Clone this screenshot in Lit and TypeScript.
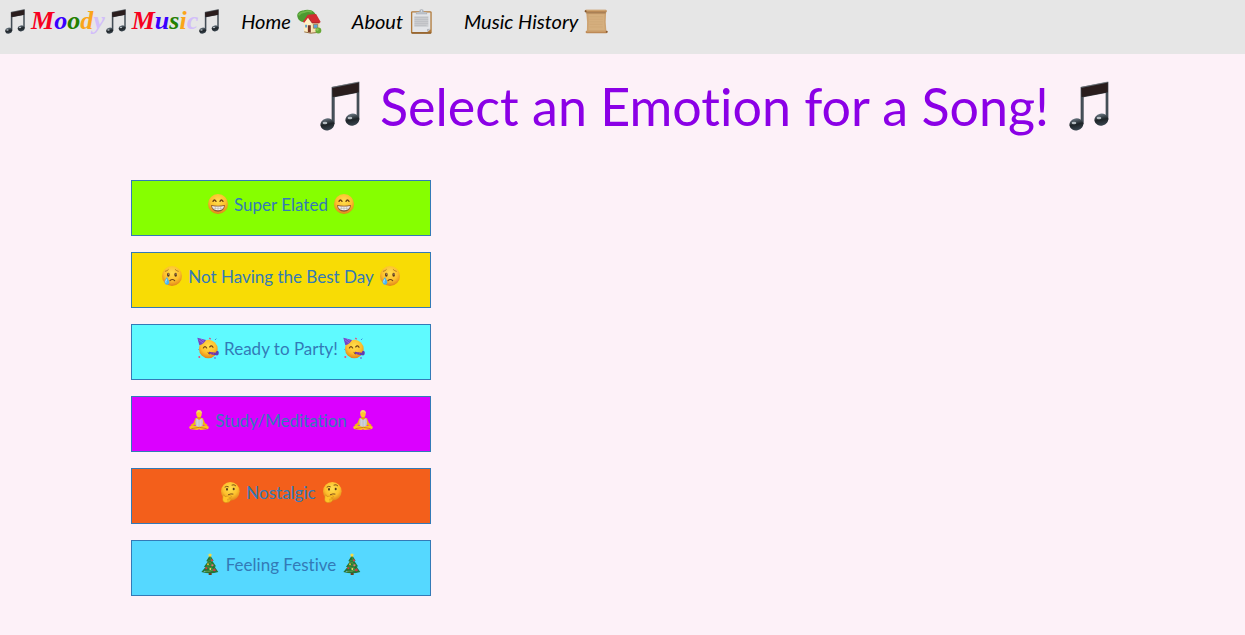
import { LitElement, html, svg, css, type SVGTemplateResult } from "lit";
import { customElement } from "lit/decorators.js";

interface Art {
  box: string;
  body: SVGTemplateResult;
}

const note: Art = {
  box: "48 32 120 150",
  body: svg`
    <path d="M83 50 166 34V148H158V68L92 81V162H83Z" fill="#3b434a"/>
    <path d="M85 53 164 37V66L86 80Z" fill="#2a1d1d"/>
    <path d="M85 51 164 35" stroke="#777b80" stroke-width="2"/>
    <path d="M87.500 80V158M162 67V142" stroke="#596773" stroke-width="2"/>
    <ellipse cx="70" cy="162" rx="21" ry="18" transform="rotate(-12 70 162)" fill="url(#noteHead)"/>
    <ellipse cx="145" cy="148" rx="21" ry="18" transform="rotate(-12 145 148)" fill="url(#noteHead)"/>
    <ellipse cx="63" cy="158" rx="7" ry="4" fill="#d5dce1" opacity=".8"/>
    <ellipse cx="138" cy="143" rx="7" ry="4" fill="#d5dce1" opacity=".8"/>`,
};

const house: Art = {
  box: "202 26 76 73",
  body: svg`
    <path d="M226 58h7v34h-7z" fill="#75512d"/>
    <path d="M204 50C199 39 210 29 221 29C232 24 251 27 256 37C264 48 253 62 240 62C230 68 208 65 204 50Z" fill="#4c9a31"/>
    <path d="M207 44q6-11 18-10q10-6 22 0" fill="none" stroke="#71b94c" stroke-width="5"/>
    <path d="M224 62 237 48 257 46 271 64V95L244 98 224 94Z" fill="#f5e3b2"/>
    <path d="M224 64 235 49 246 65V98L224 94Z" fill="#fff0c4"/>
    <path d="M235 42 260 40 274 64 270 67H248L236 50 224 66 220 63Z" fill="#d22c31"/>
    <path d="M236 50 248 67H270" stroke="#8f2022" stroke-width="2" fill="none"/>
    <path d="M235 74h9v23l-9-2z" fill="#7a3524"/>
    <path d="M252 71h13v12h-13z" fill="#58a6da" stroke="#9a6735" stroke-width="2"/>
    <path d="M227 72h5v9h-5z" fill="#4d91cc"/>
    <path d="M224 94 244 98 271 95" stroke="#987245" stroke-width="3" fill="none"/>
    <circle cx="267" cy="90" r="9" fill="#67a936"/>
    <circle cx="264" cy="87" r="4" fill="#8ac653"/>`,
};

const clipboard: Art = {
  box: "544 24 68 76",
  body: svg`
    <rect x="546" y="31" width="63" height="68" rx="4" fill="#b17b3c"/>
    <path d="M548 97h59" stroke="#815425" stroke-width="3"/>
    <path d="M550 35h55v51l-9 8h-46z" fill="#e3e5e8"/>
    <path d="M605 84l-10 10v-9z" fill="#b3b7bd"/>
    <path d="M556 46h43v32h-43z" fill="#cbcdd0"/>
    <path d="M557 50h41M557 56h41M557 62h41M557 68h41M557 74h36" stroke="#b9bbbf" stroke-width="2"/>
    <path d="M561 40v-5l10-3q0-7 7-7t7 7l10 3v5z" fill="#a7adb6"/>
    <path d="M563 36h30" stroke="#e1e5eb" stroke-width="2"/>
    <circle cx="578" cy="30" r="2.500" fill="#edf0f4"/>`,
};

const scroll: Art = {
  box: "468 22 74 78",
  body: svg`
    <path d="M473 32H535Q532 60 536 93H475Q477 60 473 32Z" fill="#cda372"/>
    <path d="M480 38H530Q527 62 531 88H480Q482 62 480 38Z" fill="#d5af7e"/>
    <path d="M482 46h44M482 54h43M483 62h42M483 70h41M483 78h42" stroke="#cba370" stroke-width="1.500"/>
    <rect x="469" y="24" width="68" height="9" rx="4" fill="#ba8a57"/>
    <path d="M472 26h62" stroke="#e1bd8d" stroke-width="2"/>
    <path d="M472 34h62" stroke="#81572f" stroke-width="2"/>
    <rect x="471" y="90" width="68" height="8" rx="4" fill="#bd8955"/>
    <path d="M474 91h60" stroke="#e0b986" stroke-width="2"/>
    <circle cx="537" cy="93" r="3" fill="#8b5c32"/>
    <circle cx="471" cy="29" r="3" fill="#80542e"/>`,
};

const grin: Art = {
  box: "0 0 66 66",
  body: svg`
    <circle cx="33" cy="33" r="30" fill="url(#face)"/>
    <path d="M18 25q4-8 9 0M39 25q4-8 9 0" fill="none" stroke="#70420e" stroke-width="4" stroke-linecap="round"/>
    <path d="M12 36Q33 40 54 36Q52 56 33 56T12 36Z" fill="#8e5733"/>
    <path d="M15 39Q33 42 51 39Q49 52 33 52T15 39Z" fill="#f4f1ec"/>
    <path d="M17 46H49M25 41V50M33 41V52M41 41V50" stroke="#a9a49d" stroke-width="1.500"/>`,
};

const cry: Art = {
  box: "0 0 66 66",
  body: svg`
    <circle cx="33" cy="33" r="30" fill="url(#face)"/>
    <path d="M13 19q6-1 9-5M43 14q4 4 9 5" fill="none" stroke="#a9721f" stroke-width="2.500" stroke-linecap="round"/>
    <ellipse cx="22" cy="29" rx="4" ry="6" fill="#5b3818"/>
    <ellipse cx="44" cy="29" rx="4" ry="6" fill="#5b3818"/>
    <circle cx="23" cy="27" r="1.500" fill="#fff5d0"/>
    <circle cx="45" cy="27" r="1.500" fill="#fff5d0"/>
    <path d="M27 47q7-7 14 0" fill="none" stroke="#764414" stroke-width="3.500" stroke-linecap="round"/>
    <path d="M18 36C14 43 10 47 11 53Q13 61 20 59Q27 56 24 48Z" fill="#48b6f3"/>
    <path d="M17 43q-4 7-2 10" fill="none" stroke="#c3efff" stroke-width="3"/>`,
};

const party: Art = {
  box: "0 0 66 66",
  body: svg`
    <circle cx="34" cy="36" r="28" fill="url(#face)"/>
    <path d="M1 2 27 9Q21 21 7 25Z" fill="#7344c5"/>
    <path d="M5 8l13 10M10 5l11 8" stroke="#a27df0" stroke-width="2"/>
    <path d="M19 33q5-8 10 0M38 30q6-7 10 1" fill="none" stroke="#714313" stroke-width="3.500" stroke-linecap="round"/>
    <path d="M30 44q5 4 10 2l-3 7z" fill="#763b20"/>
    <path d="M36 44 56 47Q59 38 65 44Q67 57 58 55Q47 54 36 50Z" fill="#633caf"/>
    <path d="M43 46l-2 5M50 47l-2 6" stroke="#d6467e" stroke-width="2"/>
    <path d="M37 3l4 4" stroke="#e64e78" stroke-width="4"/>
    <path d="M54 9l4-4" stroke="#358edc" stroke-width="3"/>
    <path d="M4 37l3 3" stroke="#45a2e1" stroke-width="3"/>
    <circle cx="7" cy="60" r="3" fill="#ec487a"/>
    <circle cx="54" cy="63" r="2.500" fill="#6d40bd"/>`,
};

const lotus: Art = {
  box: "0 0 66 66",
  body: svg`
    <path d="M22 28q11-5 23 0l6 14 8 6-3 5-12-6-1 8H24l-1-8-12 6-4-5 9-6z" fill="#f3af16"/>
    <path d="M24 28q9 4 19 0l2 10-2 16H24l-2-16z" fill="#c4c7d1"/>
    <path d="M29 31v22M38 31v22" stroke="#d6d9e1" stroke-width="2"/>
    <path d="M29 21h9v9q-5 4-9 0z" fill="#e49a17"/>
    <ellipse cx="33" cy="15" rx="8" ry="10" fill="#ffc629"/>
    <path d="M25 15q-1-12 8-12t9 12q-3-6-9-6t-8 6z" fill="#f5d86c"/>
    <path d="M5 52Q15 47 33 54Q51 47 61 52Q65 58 57 61L38 63 33 61 28 63 9 61Q1 58 5 52Z" fill="#fbc022"/>
    <path d="M10 59 34 55 56 59" fill="none" stroke="#c67c11" stroke-width="2.500"/>`,
};

const think: Art = {
  box: "0 0 66 66",
  body: svg`
    <circle cx="34" cy="31" r="28" fill="url(#face)"/>
    <path d="M18 18q5-4 10-1M39 12q7-3 11 2" fill="none" stroke="#7f5015" stroke-width="3" stroke-linecap="round"/>
    <ellipse cx="24" cy="25" rx="3" ry="4" fill="#5b3b16"/>
    <ellipse cx="44" cy="24" rx="3" ry="4" fill="#5b3b16"/>
    <path d="M28 41q8-4 14-2" fill="none" stroke="#81501a" stroke-width="3" stroke-linecap="round"/>
    <path d="M12 43Q16 39 18 47L32 44Q39 43 37 48L29 51Q37 51 35 56Q34 65 20 65Q11 65 11 55Z" fill="#ffc527" stroke="#cf8518" stroke-width="1.500"/>
    <path d="M24 55h9M24 60h8" stroke="#cc821a" stroke-width="1.500"/>`,
};

const tree: Art = {
  box: "0 0 66 66",
  body: svg`
    <path d="M29 56h9v10h-9z" fill="#713c1c"/>
    <path d="M33 6 44 23 40 24 51 40 47 41 58 57Q33 65 7 57L19 43 15 41 26 26 22 24Z" fill="#247334"/>
    <path d="M33 12 37 21 27 24M31 29 42 35 22 40M35 44 47 52 18 55" fill="none" stroke="#3c8d3e" stroke-width="4"/>
    <path d="M25 27q8 5 16-5M19 43q16 5 26-8M14 56q22 2 35-11" fill="none" stroke="#dec766" stroke-width="1.500" stroke-dasharray="2 2"/>
    <circle cx="39" cy="22" r="3" fill="#df3c4c"/>
    <circle cx="27" cy="34" r="3" fill="#e5b930"/>
    <circle cx="40" cy="37" r="3" fill="#ef6577"/>
    <circle cx="22" cy="46" r="3" fill="#d93443"/>
    <circle cx="34" cy="48" r="3" fill="#f7da66"/>
    <circle cx="46" cy="51" r="4" fill="#cf354b"/>
    <circle cx="17" cy="55" r="2" fill="#63b6de"/>
    <path d="M33 0l2 4 5 1-4 3 1 5-4-3-4 3 1-5-4-3 5-1z" fill="#ffdb3b"/>`,
};

const letterTones = ["red", "blue", "green", "orange", "lilac"];

const pages = [
  { label: "Home", art: house },
  { label: "About", art: clipboard },
  { label: "Music History", art: scroll },
];

const moods = [
  { label: "Super Elated", art: grin, tone: "lime" },
  { label: "Not Having the Best Day", art: cry, tone: "yellow" },
  { label: "Ready to Party!", art: party, tone: "aqua" },
  { label: "Study/Meditation", art: lotus, tone: "magenta" },
  { label: "Nostalgic", art: think, tone: "rust" },
  { label: "Feeling Festive", art: tree, tone: "sky" },
];

@customElement("app-root")
export class AppRoot extends LitElement {
  static styles = css`
    :host {
      display: block;
      min-height: 100vh;
      background: #fdf1f8;
      font-variant-ligatures: none;
    }
    a {
      text-decoration: none;
    }
    .defs {
      position: absolute;
      width: 0;
      height: 0;
    }
    .art {
      display: block;
      flex: none;
    }
    .bar {
      display: flex;
      align-items: flex-start;
      gap: 22px;
      box-sizing: border-box;
      min-height: 54px;
      padding: 6px 5px;
      background: #e6e6e6;
    }
    .brand {
      display: flex;
      align-items: center;
      gap: 6px;
      font-family: "Liberation Serif", serif;
      font-size: 26px;
      font-style: italic;
      font-weight: 700;
      line-height: 30px;
    }
    .brand .art {
      width: 20px;
      height: 25px;
    }
    .word + .art {
      margin-left: -5px;
    }
    .red { color: #f7001f; }
    .blue { color: #3a00ff; }
    .green { color: #238000; }
    .orange { color: #faa51a; }
    .lilac { color: #d2befa; }
    .links {
      display: flex;
      gap: 30px;
      margin: 0;
      padding: 0;
      list-style: none;
    }
    .link {
      display: flex;
      align-items: center;
      gap: 6px;
      color: #000;
      font-family: Lato, sans-serif;
      font-size: 20px;
      font-style: italic;
      line-height: 30px;
    }
    .link .art {
      width: 25px;
      height: 25px;
    }
    .title {
      display: flex;
      justify-content: center;
      align-items: center;
      gap: 20px;
      margin: 0;
      padding: 22px 0 44px 184px;
      color: #8b00e6;
      font-family: Lato, sans-serif;
      font-size: 52px;
      font-weight: 400;
      line-height: 60px;
    }
    .title .art {
      width: 40px;
      height: 50px;
    }
    .moods {
      display: grid;
      grid-template-columns: 300px;
      gap: 16px;
      margin: 0;
      padding: 0 131px 39px;
      list-style: none;
    }
    .mood {
      display: flex;
      justify-content: center;
      align-items: flex-start;
      gap: 5px;
      box-sizing: border-box;
      height: 56px;
      padding-top: 12px;
      border: 1px solid #337ab7;
      color: #337ab7;
      font-family: Lato, sans-serif;
      font-size: 17px;
      line-height: 24px;
    }
    .mood .art {
      width: 22px;
      height: 22px;
    }
    .lime { background: #86ff00; }
    .yellow { background: #f8dc05; }
    .aqua { background: #5ffaff; }
    .magenta { background: #db00ff; }
    .rust { background: #f35f1b; }
    .sky { background: #55d8ff; }
  `;

  private art(item: Art) {
    return html`<svg class="art" viewBox=${item.box} aria-hidden="true">${item.body}</svg>`;
  }

  private word(text: string) {
    return html`<span class="word">${[...text].map(
      (letter, i) => html`<span class=${letterTones[i]}>${letter}</span>`,
    )}</span>`;
  }

  render() {
    return html`
      <svg class="defs" aria-hidden="true">
        <defs>
          <radialGradient id="face" cx=".5" cy=".35" r=".65">
            <stop offset="0" stop-color="#ffdf4f"/>
            <stop offset=".6" stop-color="#fdc02c"/>
            <stop offset="1" stop-color="#e0821a"/>
          </radialGradient>
          <linearGradient id="noteHead" x1="0" y1="0" x2="0" y2="1">
            <stop offset="0" stop-color="#697681"/>
            <stop offset=".5" stop-color="#1d2327"/>
            <stop offset="1" stop-color="#3a4650"/>
          </linearGradient>
        </defs>
      </svg>
      <nav class="bar">
        <a class="brand" href="#home" aria-label="Moody Music">
          ${this.art(note)}${this.word("Moody")}${this.art(note)}${this.word("Music")}${this.art(note)}
        </a>
        <ul class="links">
          ${pages.map(
            (page) => html`<li><a class="link" href="#">${page.label}${this.art(page.art)}</a></li>`,
          )}
        </ul>
      </nav>
      <main>
        <h1 class="title">${this.art(note)}<span>Select an Emotion for a Song!</span>${this.art(note)}</h1>
        <ul class="moods">
          ${moods.map(
            (mood) => html`<li>
              <a class="mood ${mood.tone}" href="#">${this.art(mood.art)}<span>${mood.label}</span>${this.art(mood.art)}</a>
            </li>`,
          )}
        </ul>
      </main>
    `;
  }
}
